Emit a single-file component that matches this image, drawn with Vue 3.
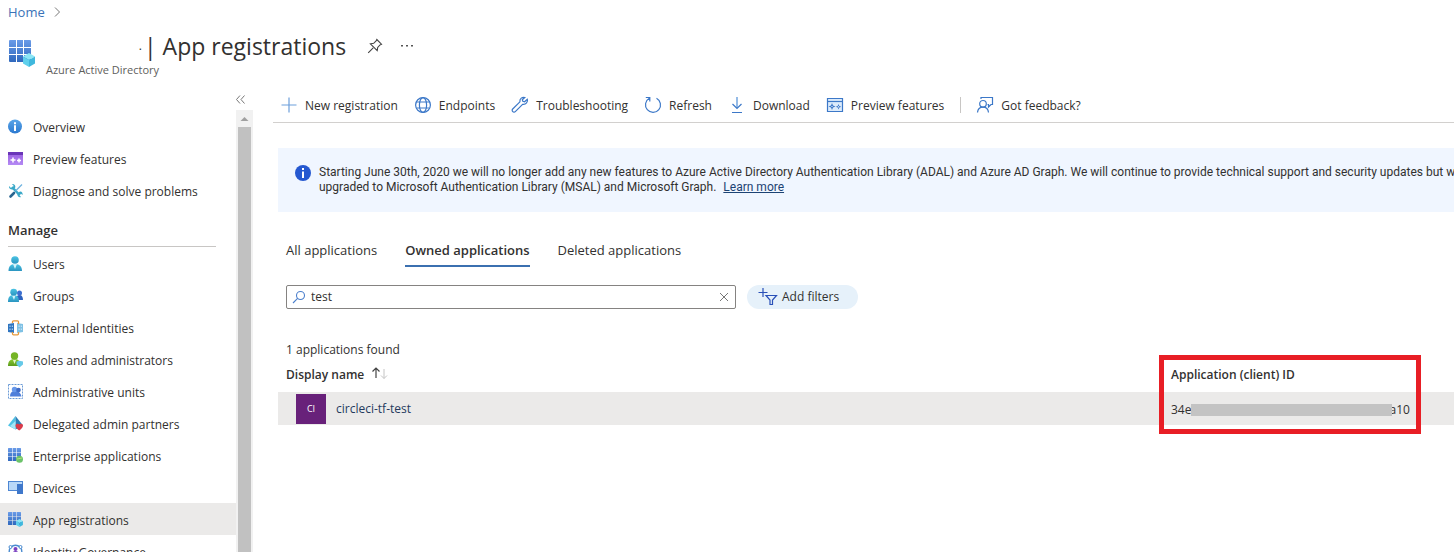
<script setup>
import { ref } from 'vue'

const query = ref('test')
const activeTab = ref('Owned applications')
const tabs = ['All applications', 'Owned applications', 'Deleted applications']

const general = [
  { icon: 'info', label: 'Overview' },
  { icon: 'preview', label: 'Preview features' },
  { icon: 'diagnose', label: 'Diagnose and solve problems' }
]
const manage = [
  { icon: 'user', label: 'Users' },
  { icon: 'groups', label: 'Groups' },
  { icon: 'external', label: 'External Identities' },
  { icon: 'roles', label: 'Roles and administrators' },
  { icon: 'units', label: 'Administrative units' },
  { icon: 'partners', label: 'Delegated admin partners' },
  { icon: 'enterprise', label: 'Enterprise applications' },
  { icon: 'devices', label: 'Devices' },
  { icon: 'apps', label: 'App registrations', current: true },
  { icon: 'governance', label: 'Identity Governance' }
]
const commands = [
  { icon: 'plus', label: 'New registration' },
  { icon: 'globe', label: 'Endpoints' },
  { icon: 'wrench', label: 'Troubleshooting' },
  { icon: 'refresh', label: 'Refresh' },
  { icon: 'download', label: 'Download' },
  { icon: 'window', label: 'Preview features' },
  { icon: 'feedback', label: 'Got feedback?', divided: true }
]
</script>

<template>
  <div class="page">
    <svg class="defs" aria-hidden="true">
      <defs>
        <linearGradient id="gBlue" x1="0" y1="0" x2="0" y2="1">
          <stop offset="0" stop-color="#6a9be8" /><stop offset="1" stop-color="#2f68bd" />
        </linearGradient>
        <linearGradient id="gInfo" x1="0" y1="0" x2="0" y2="1">
          <stop offset="0" stop-color="#5aa5e8" /><stop offset="1" stop-color="#2b79d0" />
        </linearGradient>
        <linearGradient id="gCyan" x1="0" y1="0" x2="0" y2="1">
          <stop offset="0" stop-color="#4cc4e4" /><stop offset="1" stop-color="#2a94c0" />
        </linearGradient>
        <linearGradient id="gGreen" x1="0" y1="0" x2="0" y2="1">
          <stop offset="0" stop-color="#8ccc30" /><stop offset="1" stop-color="#5b9a1c" />
        </linearGradient>
        <linearGradient id="gPurple" x1="0" y1="0" x2="0" y2="1">
          <stop offset="0" stop-color="#9a5fe0" /><stop offset="1" stop-color="#b48af4" />
        </linearGradient>
        <symbol id="i-grid" viewBox="0 0 22 22">
          <path fill="url(#gBlue)" d="M1 0h6v7H0V1a1 1 0 0 1 1-1zM8 0h6v7H8zM15 0h6a1 1 0 0 1 1 1v6h-7zM0 8h7v6H0zM8 8h6v6H8zM15 8h7v6h-7zM0 15h7v7H1a1 1 0 0 1-1-1zM8 15h6v7H8zM15 15h7v6a1 1 0 0 1-1 1h-6z" />
        </symbol>
        <symbol id="i-cube" viewBox="0 0 12 14">
          <path fill="#8ce6f6" d="M6 0l6 3.500-6 3.500-6-3.500z" />
          <path fill="#5fd0ec" d="M0 3.500l6 3.500v7l-6-3.500z" />
          <path fill="#3fb8dd" d="M12 3.500l-6 3.500v7l6-3.500z" />
        </symbol>
      </defs>
    </svg>

    <header class="top">
      <nav class="crumbs" aria-label="Breadcrumb">
        <a href="#">Home</a>
        <svg width="8" height="10" viewBox="0 0 8 10"><path d="M2 .5L6.500 5 2 9.500" fill="none" stroke="#777" /></svg>
      </nav>
      <div class="heading">
        <svg class="app-icon" width="28" height="28" viewBox="0 0 28 28">
          <use href="#i-grid" x="1" y="1" width="22" height="22" />
          <use href="#i-cube" x="15" y="14" width="12" height="14" />
        </svg>
        <div class="names">
          <div class="title-row">
            <span class="tenant">.</span>
            <h1>| App registrations</h1>
            <button class="plain pin" aria-label="Pin">
              <svg width="16" height="16" viewBox="0 0 16 16" fill="none" stroke="#444" stroke-width="1.1"><path d="M9.800 1.500l4.700 4.700-1.200.5-2.600 2.700-.5 3.200-6.800-6.800 3.300-.5L9.300 2.700zM6.200 9.800L1.200 14.800" /></svg>
            </button>
            <button class="plain" aria-label="More">
              <svg width="14" height="4" viewBox="0 0 14 4" fill="#555"><path d="M1 1h2v1.500H1zM6 1h2v1.500H6zM11 1h2v1.500h-2z" /></svg>
            </button>
          </div>
          <p>Azure Active Directory</p>
        </div>
      </div>
    </header>

    <div class="body">
      <aside>
        <div class="collapse">
          <button class="plain" aria-label="Collapse menu">
            <svg width="9" height="9" viewBox="0 0 9 9" fill="none" stroke="#777"><path d="M4 .5l-3.500 4 3.500 4M8.500.5L5 4.500l3.500 4" /></svg>
          </button>
        </div>
        <div class="menu-area">
          <nav class="menu" aria-label="Resource menu">
            <template v-for="(group, g) in [general, manage]" :key="g">
              <h2 v-if="g === 1">Manage</h2>
              <a v-for="item in group" :key="item.label" href="#" :class="{ current: item.current }">
                <svg width="16" height="16" viewBox="0 0 16 16">
                  <g v-if="item.icon === 'info'">
                    <circle cx="7" cy="7.500" r="7" fill="url(#gInfo)" /><path fill="#fff" d="M6 6.300h2V12H6zM6 3.300h2v2H6z" />
                  </g>
                  <g v-else-if="item.icon === 'preview'">
                    <path fill="url(#gPurple)" d="M0 2h15v12H0z" /><path fill="#6a35b8" d="M0 1h15v3H0z" />
                    <path stroke="#fff" stroke-width="1.500" d="M5 6.500v5M2.500 9h5M11 7.500v4M9 9.500h4" />
                  </g>
                  <g v-else-if="item.icon === 'diagnose'" fill="none">
                    <path stroke="#39a8c8" stroke-width="2.500" d="M4 4l7.500 8" />
                    <path fill="#39a8c8" d="M1 3l2 2 2-.5.5-2L3.800 1c2-.5 4 1 3.500 3.500L5 6.500C2.500 7 .5 5 1 3zM10 10l2-1.500c2-.2 3 2 2.500 3.500L13 10.800l-1.500 1.500L13 14c-2 .8-4-1-3.500-3z" />
                    <path stroke="#6eb3e0" stroke-width="1.300" d="M14 1.500L7.500 8" /><path stroke="#2a6590" stroke-width="2.600" stroke-linecap="round" d="M6 10l-3.500 3.500" />
                  </g>
                  <g v-else-if="item.icon === 'user'" fill="url(#gCyan)">
                    <path d="M.5 15c0-4 1.500-7 6.500-7s7 3 7 7z" /><path fill="#d4f3fb" d="M5 8h4l-2 5z" /><circle cx="7" cy="4" r="3.800" />
                  </g>
                  <g v-else-if="item.icon === 'groups'" fill="url(#gCyan)">
                    <path fill="#2d62be" d="M8 12c0-3 1-5 3.500-5s3.500 2 3.500 5z" /><circle cx="11.500" cy="5" r="2.500" fill="#3c6fd0" />
                    <path d="M0 14c0-4 1-7 5.500-7S11 10 11 14z" /><path fill="#d4f3fb" d="M4 7.500h3.500L6 12z" /><circle cx="5.700" cy="4.200" r="3.400" />
                  </g>
                  <g v-else-if="item.icon === 'external'">
                    <path fill="#2f75c0" d="M0 4l6-1v10l-6-1z" /><path fill="#7fc1e4" d="M9 3l6 1v8l-6 1z" />
                    <path fill="#bfe0f5" d="M1.500 5.500h1V7h-1zM3.800 5.500h1V7h-1zM1.500 8.500h1V10h-1zM3.800 8.500h1V10h-1zM10.500 5.500h1.300V7h-1.300zM12.800 5.500H14V7h-1.200zM10.500 8.500h1.300V10h-1.300zM12.800 8.500H14V10h-1.200z" />
                    <path fill="none" stroke="#e79a3c" stroke-width="1.300" d="M4.500 3V1.800Q4.500.8 5.500.8h4q1 0 1 1V4M4.500 12v1.800q0 1 1 1h4q1 0 1-1V12" />
                  </g>
                  <g v-else-if="item.icon === 'roles'">
                    <path fill="url(#gGreen)" d="M0 14c0-4 1.500-7 6.500-7S12 10 12 14z" /><path fill="#e4f5cc" d="M4.800 7.500h3.400L6.500 12z" /><circle cx="6.500" cy="4" r="3.700" fill="#76b526" />
                    <path fill="#66c9e8" d="M8.500 9.500l3-.8 3.500.8v3l-3.500 3-3-3z" />
                  </g>
                  <g v-else-if="item.icon === 'units'">
                    <path fill="none" stroke="#6b9bd6" stroke-dasharray="2 1" d="M.5.5h14v14H.5z" />
                    <path fill="#4f7fda" d="M2 12.500q0-5 4-5.500h3q3.500 1 4.500 5.500z" /><circle cx="6.500" cy="5.500" r="2.700" fill="#6798ea" /><circle cx="10.500" cy="6" r="2.300" fill="#3e69c4" />
                  </g>
                  <g v-else-if="item.icon === 'partners'">
                    <path fill="#4fc3e6" d="M7.500 0L0 9.500l7.500 4z" /><path fill="#2c80b8" d="M7.500 0L15 9.500l-7.500 4z" /><path fill="#a6e6f7" d="M7.500 5L2 10l5.500 3.500z" />
                    <path fill="#da3b4b" d="M7.500 9.500c0-2 3-2.500 3.700-1 .8-1.500 3.800-1 3.800 1 0 2.200-2 3.500-3.800 5-1.800-1.500-3.700-2.800-3.700-5z" />
                  </g>
                  <g v-else-if="item.icon === 'enterprise'">
                    <use href="#i-grid" x="0" y="0" width="13" height="13" /><circle cx="11.500" cy="11.300" r="3.500" fill="#6cc36a" /><path stroke="#b4e07a" d="M9 11l5-1" />
                  </g>
                  <g v-else-if="item.icon === 'devices'">
                    <path fill="#4d86d3" d="M0 1h15v10H0z" /><path fill="#b9d8f8" d="M1 2h13v8H1z" /><path fill="#3f78cb" d="M9 4h6v10H9z" />
                  </g>
                  <g v-else-if="item.icon === 'apps'">
                    <use href="#i-grid" x="0" y="0" width="13" height="13" /><use href="#i-cube" x="8" y="7" width="7" height="8" />
                  </g>
                  <g v-else fill="none" stroke="#4a8bd0">
                    <circle cx="7.500" cy="7.500" r="6.300" stroke-width="1.400" /><circle cx="7.500" cy="5" r="2" fill="#7a3fc0" stroke="none" />
                    <path fill="#7a3fc0" stroke="none" d="M4 11q0-4 3.500-4t3.500 4z" /><circle cx="2.500" cy="3" r="1.500" fill="#fff" /><circle cx="12.500" cy="3" r="1.500" fill="#fff" />
                  </g>
                </svg>
                <span class="label">{{ item.label }}</span>
              </a>
            </template>
          </nav>
          <div class="scroll-track" aria-hidden="true">
            <svg width="17" height="17" viewBox="0 0 17 17"><path fill="#a0a0a0" d="M4.500 11h8L8.500 7z" /></svg>
            <div class="thumb"></div>
          </div>
        </div>
      </aside>

      <main>
        <div class="toolbar">
          <button v-for="c in commands" :key="c.label" class="plain" :class="{ divided: c.divided }">
            <svg width="18" height="18" viewBox="0 0 18 18" fill="none" stroke="#3c78c8" stroke-width="1.200">
              <path v-if="c.icon === 'plus'" stroke="#6d9fdb" d="M9 1.500v15M1.500 9h15" />
              <g v-else-if="c.icon === 'globe'"><circle cx="9" cy="9" r="7.400" /><ellipse cx="9" cy="9" rx="3.600" ry="7.400" /><path d="M2.500 6h13M2.500 12h13" /></g>
              <path v-else-if="c.icon === 'wrench'" d="M13.800 1.500c-2.500-.8-5.300 1-4.900 4.300L1.700 13c-1.700 1.700 1 4.300 2.600 2.600l7.300-7.300c3.400.6 5.600-2.500 4.700-5l-2.700 2.500-1.800-.5-.5-1.600z" />
              <path v-else-if="c.icon === 'refresh'" d="M12.500 2.200a7.500 7.500 0 1 1-7.200.1M1.800 1.500h4v4" />
              <g v-else-if="c.icon === 'download'"><path stroke="#72a4df" stroke-width="1.500" d="M9 1v11" /><path d="M4.500 8L9 12.500 13.500 8M4 16.500h10" /></g>
              <g v-else-if="c.icon === 'window'"><path fill="#dcebfb" d="M1.500 2.500h15v13h-15z" /><path d="M1.500 5.500h15" /><path fill="#3c78c8" stroke="none" d="M6 7l1 2.500 2.500 1L7 11.500 6 14l-1-2.500-2.500-1L5 9.500zM12.500 8l.8 2 2 .8-2 .8-.8 2-.8-2-2-.8 2-.8z" /><path stroke="#fff" stroke-width="1" d="M5.500 10.500h1M12 10.800h1" /></g>
              <g v-else><circle cx="7" cy="7.800" r="3.300" /><path d="M1.500 16.500q.5-5.300 5.500-5.300t5.500 5.300M5 3V1.500h11.500v7H15l-2.500 2.500V8.500h-1" /></g>
            </svg>
            <span class="label">{{ c.label }}</span>
          </button>
        </div>

        <section class="content">
          <div class="banner">
            <svg width="16" height="16" viewBox="0 0 16 16"><circle cx="8" cy="8" r="8" fill="#2558d0" /><path fill="#fff" d="M7 6.500h2V13H7zM7 3h2v2H7z" /></svg>
            <p>
              Starting June 30th, 2020 we will no longer add any new features to Azure Active Directory Authentication Library (ADAL) and Azure AD Graph. We will continue to provide technical support and security updates but w<br />
              upgraded to Microsoft Authentication Library (MSAL) and Microsoft Graph. <a href="#">Learn more</a>
            </p>
          </div>

          <div class="tabs" role="tablist">
            <button v-for="t in tabs" :key="t" role="tab" class="plain" :class="{ active: t === activeTab }" :aria-selected="t === activeTab" @click="activeTab = t">{{ t }}</button>
          </div>

          <div class="filters">
            <div class="search">
              <svg width="14" height="14" viewBox="0 0 14 14" fill="none" stroke="#4b7fcc" stroke-width="1.100"><circle cx="8.500" cy="5.500" r="4" /><path d="M5.600 8.400L1 13" /></svg>
              <input v-model="query" type="text" aria-label="Search applications" />
              <button class="plain" aria-label="Clear" @click="query = ''">
                <svg width="10" height="10" viewBox="0 0 10 10" stroke="#777"><path d="M1 1l8 8M9 1L1 9" /></svg>
              </button>
            </div>
            <button class="pill">
              <svg width="20" height="18" viewBox="0 0 20 18" fill="none" stroke="#2a50b8" stroke-width="1.200"><path d="M5 0v9M.5 4.500h9M8 7.500h10.500L14.500 12v4.500H12V12z" /></svg>
              Add filters
            </button>
          </div>

          <p class="count">1 applications found</p>
          <div class="results">
            <table>
              <thead>
                <tr>
                  <th class="name">Display name
                    <svg width="18" height="12" viewBox="0 0 18 12" fill="none"><path stroke="#444" stroke-width="1.200" d="M5 11V1M1.500 4.500L5 1l3.500 3.500" /><path stroke="#c4c4c4" d="M13 2v9.500M10 8.500l3 3 3-3" /></svg>
                  </th>
                  <th class="id">Application (client) ID</th>
                </tr>
              </thead>
              <tbody>
                <tr>
                  <td class="name"><div class="app"><span class="tile">CI</span><a href="#">circleci-tf-test</a></div></td>
                  <td class="id"><div class="masked">34e<span class="mask"></span>a10</div></td>
                </tr>
              </tbody>
            </table>
            <div class="highlight"></div>
          </div>
        </section>
      </main>
    </div>
  </div>
</template>

<style>
body { margin: 0; background: #fff; }
</style>

<style scoped>
* { box-sizing: border-box; }
.page { height: 100vh; overflow: hidden; display: flex; flex-direction: column; font: 12px/16px "Open Sans", sans-serif; color: #323130; }
.defs { position: absolute; width: 0; height: 0; }
svg { flex: none; display: block; }
h1, h2, p { margin: 0; font-weight: 400; }
.plain { border: 0; padding: 0; background: none; font: inherit; color: inherit; display: flex; align-items: center; white-space: nowrap; }
.label { padding-top: 2px; }
.top { flex: none; height: 88px; padding: 3px 8px 0; }
.crumbs { display: flex; align-items: center; gap: 8px; height: 18px; font-size: 13px; }
.crumbs a { color: #3a73b8; text-decoration: none; }
.heading { display: flex; padding-top: 8px; }
.app-icon { margin-top: 10px; }
.names { padding-left: 10px; }
.title-row { display: flex; align-items: center; height: 33px; }
.tenant { width: 98px; padding-right: 2px; text-align: right; }
h1 { font-size: 23px; line-height: 32px; }
.pin { margin: 0 17px 0 21px; }
.names p { line-height: 16px; color: #605e5c; font-size: 11px; }
.body { flex: 1; min-height: 0; display: flex; }
aside { flex: none; width: 253px; display: flex; flex-direction: column; }
.collapse { flex: none; height: 22px; display: flex; justify-content: flex-end; align-items: center; padding-right: 8px; }
.menu-area { flex: 1; min-height: 0; display: flex; }
.menu { flex: 1; overflow: hidden; }
.menu a { display: flex; align-items: center; gap: 9px; height: 32px; padding: 2px 0 0 8px; color: inherit; text-decoration: none; white-space: nowrap; }
.menu a.current { background: #ebeae9; }
.menu h2 { margin: 8px 20px 0 8px; height: 33px; border-bottom: 1px solid #c8c6c4; font-size: 13px; font-weight: 600; line-height: 32px; }
.scroll-track { flex: none; width: 17px; background: #f1f1f1; display: flex; flex-direction: column; }
.thumb { flex: 1; margin: 0 2px; background: #c1c1c1; }
main { flex: 1; min-width: 0; padding-left: 20px; }
.toolbar { height: 35px; border-bottom: 1px solid #d2d0ce; display: flex; align-items: center; gap: 16px; padding-left: 7px; }
.toolbar .plain { gap: 7px; }
.toolbar .divided { position: relative; margin-left: 16px; }
.divided::before { content: ""; position: absolute; left: -16px; height: 16px; border-left: 1px solid #c8c6c4; }
.content { padding: 25px 0 0 5px; }
.banner { height: 64px; padding: 17px 0 0 17px; background: #f0f6ff; display: flex; overflow: hidden; }
.banner p { padding-left: 8px; font-family: Roboto, sans-serif; font-size: 12px; line-height: 15px; white-space: nowrap; }
.banner a { margin-left: 4px; color: #1c4374; }
.tabs { display: flex; gap: 28px; padding: 22px 0 0 8px; }
.tabs .plain { height: 33px; border-bottom: 2px solid transparent; font-size: 13px; }
.tabs .active { font-weight: 600; border-color: #3b70b0; }
.filters { display: flex; align-items: center; gap: 11px; padding: 18px 0 0 8px; }
.search { width: 450px; height: 24px; border: 1px solid #858381; border-radius: 2px; display: flex; align-items: center; padding: 0 6px 0 5px; }
.search input { flex: 1; min-width: 0; border: 0; outline: 0; padding: 0 5px; font: inherit; color: inherit; background: none; }
.pill { height: 24px; padding: 0 19px 0 11px; border: 0; border-radius: 12px; background: #e6f1fa; font: inherit; color: inherit; display: flex; align-items: center; gap: 4px; }
.count { padding: 33px 0 0 8px; }
.results { position: relative; }
table { width: 100%; border-collapse: collapse; table-layout: fixed; }
th, td { padding: 0; text-align: left; }
th { height: 34px; font-weight: 600; white-space: nowrap; }
th svg { display: inline-block; margin-left: 4px; }
th.name { padding-left: 8px; }
.id { width: 283px; }
td { height: 33px; background: #ebeae9; }
.app { display: flex; align-items: center; padding-left: 18px; gap: 10px; }
.tile { width: 30px; height: 30px; background: #68217a; color: #fff; font-size: 9px; line-height: 30px; text-align: center; }
.app a { color: #243a5e; text-decoration: none; }
.masked { display: flex; align-items: center; padding-top: 2px; }
.mask { width: 201px; height: 12px; margin-right: -3px; background: #c3c3c3; position: relative; }
.highlight { position: absolute; top: -3px; right: 33px; width: 262px; height: 79px; border: 5px solid #e81e25; }
</style>
